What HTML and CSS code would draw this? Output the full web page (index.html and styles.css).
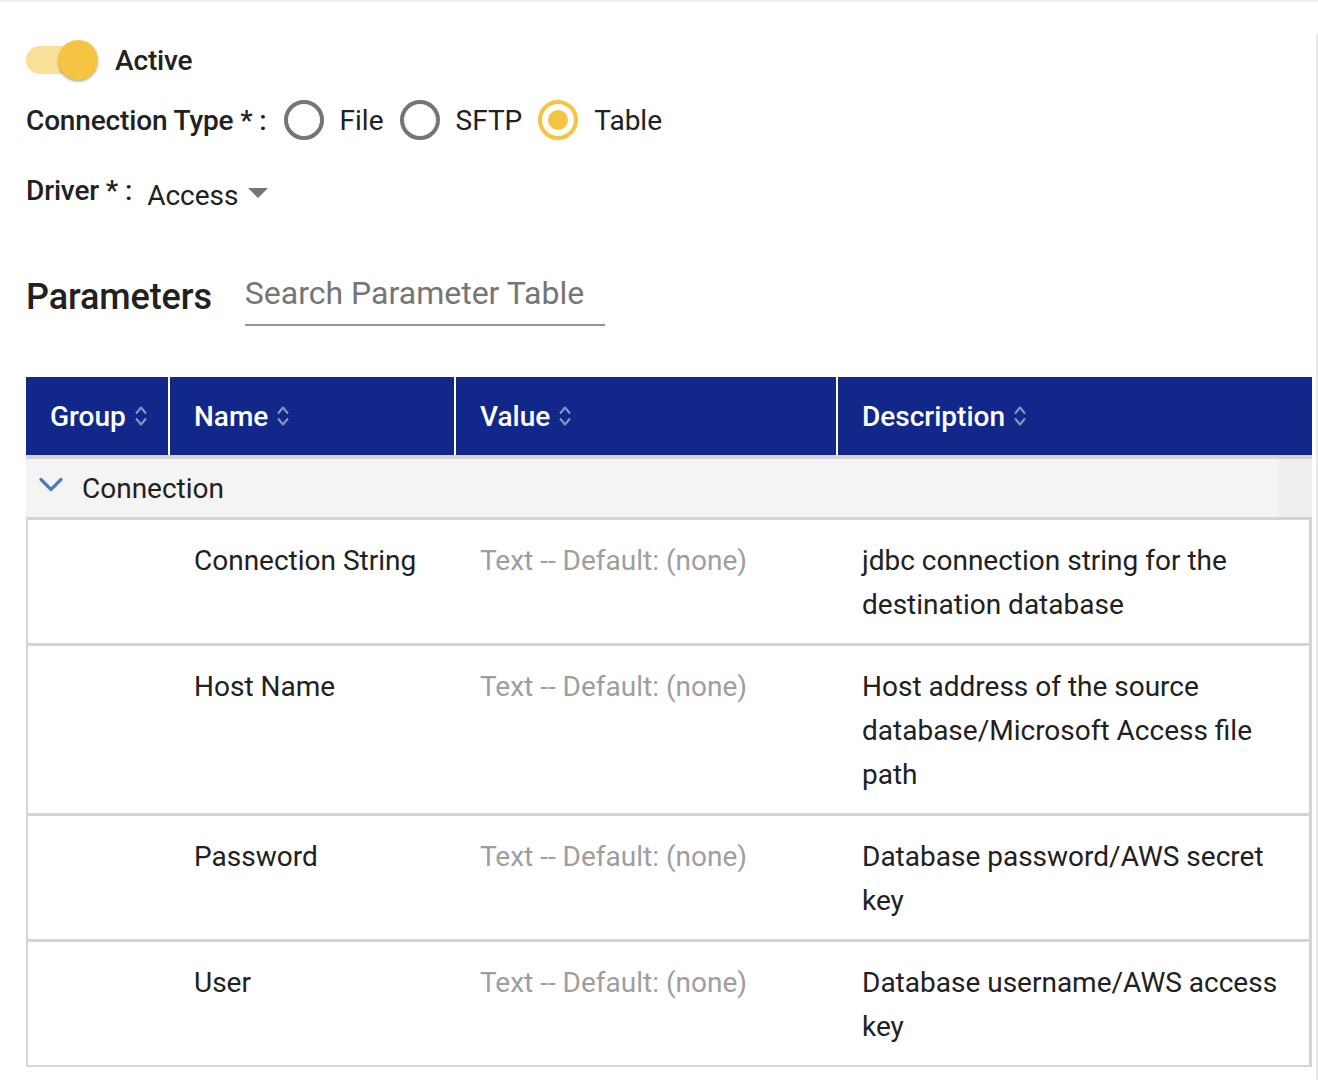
FILE: index.html
```html
<!DOCTYPE html>
<html lang="en">
<head>
<meta charset="utf-8">
<title>Connection Parameters</title>
<link rel="stylesheet" href="styles.css">
</head>
<body>
<div class="topline"></div>
<div class="page">
  <main class="content">
    <div class="row toggle-row">
      <span class="switch"><span class="track"></span><span class="thumb"></span></span>
      <span class="label-strong">Active</span>
    </div>

    <div class="row conn-row">
      <span class="label-strong conn-label">Connection Type * :</span>
      <span class="radio"><span class="circle"></span><span class="radio-text">File</span></span>
      <span class="radio"><span class="circle"></span><span class="radio-text">SFTP</span></span>
      <span class="radio checked"><span class="circle"><span class="dot"></span></span><span class="radio-text">Table</span></span>
    </div>

    <div class="row driver-row">
      <span class="label-strong">Driver * :</span>
      <span class="select">Access
        <svg class="caret" width="20" height="10" viewBox="0 0 20 10"><path d="M0 0 L20 0 L10 10 Z" fill="#757575"/></svg>
      </span>
    </div>

    <div class="params-row">
      <h2 class="params-title">Parameters</h2>
      <div class="search">Search Parameter Table</div>
    </div>

    <div class="table">
      <div class="thead">
        <div class="th">Group<svg class="sort" width="12" height="22" viewBox="0 0 12 22"><path d="M1.5 8 L6 2.5 L10.5 8 M1.5 14 L6 19.5 L10.5 14" fill="none" stroke="#8c95c6" stroke-width="2" stroke-linecap="round" stroke-linejoin="round"/></svg></div>
        <div class="th">Name<svg class="sort" width="12" height="22" viewBox="0 0 12 22"><path d="M1.5 8 L6 2.5 L10.5 8 M1.5 14 L6 19.5 L10.5 14" fill="none" stroke="#8c95c6" stroke-width="2" stroke-linecap="round" stroke-linejoin="round"/></svg></div>
        <div class="th">Value<svg class="sort" width="12" height="22" viewBox="0 0 12 22"><path d="M1.5 8 L6 2.5 L10.5 8 M1.5 14 L6 19.5 L10.5 14" fill="none" stroke="#8c95c6" stroke-width="2" stroke-linecap="round" stroke-linejoin="round"/></svg></div>
        <div class="th">Description<svg class="sort" width="12" height="22" viewBox="0 0 12 22"><path d="M1.5 8 L6 2.5 L10.5 8 M1.5 14 L6 19.5 L10.5 14" fill="none" stroke="#8c95c6" stroke-width="2" stroke-linecap="round" stroke-linejoin="round"/></svg></div>
      </div>

      <div class="group-row">
        <div class="group-main">
          <svg class="chev" width="24" height="16" viewBox="0 0 24 16"><path d="M2 2.5 L12 12.5 L22 2.5" fill="none" stroke="#4a7fb8" stroke-width="3.2" stroke-linecap="round" stroke-linejoin="round"/></svg>
          <span>Connection</span>
        </div>
        <div class="group-side"></div>
      </div>

      <div class="tbody">
        <div class="tr">
          <div class="td"></div>
          <div class="td">Connection String</div>
          <div class="td muted">Text -- Default: (none)</div>
          <div class="td">jdbc connection string for the destination database</div>
        </div>
        <div class="tr">
          <div class="td"></div>
          <div class="td">Host Name</div>
          <div class="td muted">Text -- Default: (none)</div>
          <div class="td">Host address of the source database/Microsoft Access file path</div>
        </div>
        <div class="tr">
          <div class="td"></div>
          <div class="td">Password</div>
          <div class="td muted">Text -- Default: (none)</div>
          <div class="td">Database password/AWS secret key</div>
        </div>
        <div class="tr last">
          <div class="td"></div>
          <div class="td">User</div>
          <div class="td muted">Text -- Default: (none)</div>
          <div class="td">Database username/AWS access key</div>
        </div>
      </div>
    </div>
  </main>
  <div class="scrolltrack"></div>
</div>
</body>
</html>
```

FILE: styles.css
```css
* { box-sizing: border-box; }

html, body {
  margin: 0;
  padding: 0;
  background: #ffffff;
  font-family: Roboto, "Noto Sans", "Liberation Sans", sans-serif;
  color: #212121;
}

.topline {
  height: 2px;
  background: #f0f0f0;
}

.page {
  display: flex;
  min-height: 1078px;
}

.content {
  width: 1316px;
  padding: 0 4px 0 26px;
}

.scrolltrack {
  width: 2px;
  margin-top: 32px;
  background: #e9e9e9;
}

.row {
  display: flex;
  align-items: center;
  height: 40px;
}

.label-strong {
  font-size: 28px;
  font-weight: 500;
  letter-spacing: -0.15px;
  color: #212121;
  white-space: nowrap;
}

/* toggle */
.toggle-row { margin-top: 38px; }

.switch {
  position: relative;
  width: 72px;
  height: 40px;
  margin-right: 17px;
  display: inline-block;
}

.track {
  display: block;
  width: 68px;
  height: 28px;
  margin-top: 6px;
  border-radius: 14px;
  background: #fbe09c;
}

.thumb {
  position: absolute;
  left: 32px;
  top: 0;
  width: 40px;
  height: 40px;
  border-radius: 50%;
  background: #f5c443;
  box-shadow: 0 2px 3px rgba(0,0,0,0.22), 0 1px 1px rgba(0,0,0,0.12);
}

/* connection type */
.conn-row { margin-top: 20px; }

.conn-label { margin-right: 17px; }

.radio {
  display: inline-flex;
  align-items: center;
  margin-right: 16px;
}

.circle {
  width: 40px;
  height: 40px;
  border-radius: 50%;
  border: 4px solid #757575;
  display: flex;
  align-items: center;
  justify-content: center;
  margin-right: 16px;
}

.radio.checked .circle { border-color: #f5c443; }

.dot {
  width: 20px;
  height: 20px;
  border-radius: 50%;
  background: #f5c443;
}

.radio-text {
  font-size: 28px;
  font-weight: 400;
  color: #212121;
}

/* driver */
.driver-row { margin-top: 30px; }

.select {
  display: inline-flex;
  align-items: center;
  margin-left: 15px;
  padding-top: 10px;
  font-size: 28px;
  color: #212121;
}

.caret { margin-left: 10px; margin-top: -4px; }

/* parameters */
.params-row {
  display: flex;
  align-items: flex-start;
  margin-top: 54px;
}

.params-title {
  margin: 0 33px 0 0;
  padding-top: 3px;
  font-size: 36px;
  font-weight: 500;
  letter-spacing: -0.1px;
  line-height: 60px;
  color: #212121;
}

.search {
  width: 360px;
  height: 62px;
  line-height: 58px;
  padding-left: 0;
  border-bottom: 2px solid #949494;
  font-size: 32px;
  color: #757575;
}

/* table */
.table { margin-top: 50px; }

.thead {
  display: grid;
  grid-template-columns: 142px 284px 380px 474px;
  column-gap: 2px;
  border-bottom: 4px solid #d5d5d5;
}

.th {
  height: 78px;
  background: #11288a;
  color: #ffffff;
  font-size: 28px;
  font-weight: 500;
  display: flex;
  align-items: center;
  padding-left: 24px;
}

.sort { margin-left: 9px; }

.group-row {
  display: flex;
  height: 61px;
  border-bottom: 3px solid #d5d5d5;
}

.group-main {
  flex: 1;
  background: #f4f4f4;
  display: flex;
  align-items: center;
  padding-left: 13px;
  font-size: 28px;
}

.chev { margin-right: 19px; margin-top: -6px; }

.group-side {
  width: 34px;
  background: #efefef;
}

.tbody {
  border-left: 2px solid #d5d5d5;
  border-right: 3px solid #d5d5d5;
}

.tr {
  display: grid;
  grid-template-columns: 142px 286px 382px 471px;
  border-bottom: 3px solid #d5d5d5;
}

.tr.last { border-bottom-width: 2px; }

.td {
  padding: 19px 25px 16px 24px;
  font-size: 28px;
  line-height: 44px;
  color: #212121;
}

.td:first-child { padding-left: 0; }

.td.muted { color: #9e9e9e; }
```
